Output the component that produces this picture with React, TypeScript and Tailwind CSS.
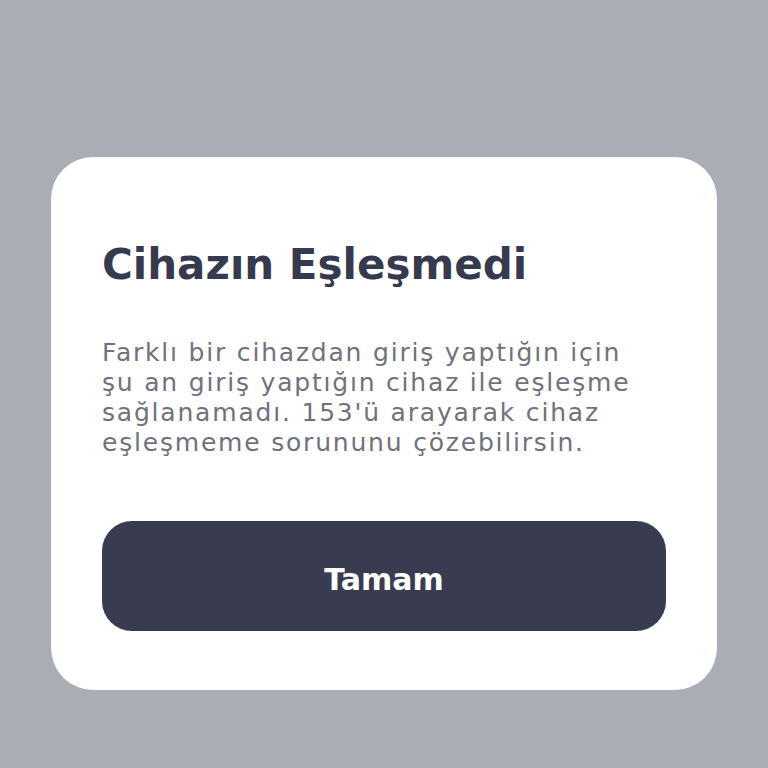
export default function App() {
  return (
    <div className="min-h-screen w-full bg-[#aaadb4] flex items-start justify-center pt-[157px]" style={{ fontFamily: "'DejaVu Sans', 'Noto Sans', sans-serif" }}>
      <div className="w-[666px] h-[533px] bg-white rounded-[42px] px-[51px] pt-[80px]">
        <h1 className="text-[42px] leading-[56px] font-bold text-[#363a4f]">Cihazın Eşleşmedi</h1>
        <p className="mt-[45px] text-[25px] leading-[30px] tracking-[1.8px] text-[#6f717c]">
          Farklı bir cihazdan giriş yaptığın için
          <br />
          şu an giriş yaptığın cihaz ile eşleşme
          <br />
          sağlanamadı. 153'ü arayarak cihaz
          <br />
          eşleşmeme sorununu çözebilirsin.
        </p>
        <button className="mt-[63px] w-full h-[110px] rounded-[30px] bg-[#393c50] text-white text-[30px] font-bold pt-[6px]">
          Tamam
        </button>
      </div>
    </div>
  );
}
